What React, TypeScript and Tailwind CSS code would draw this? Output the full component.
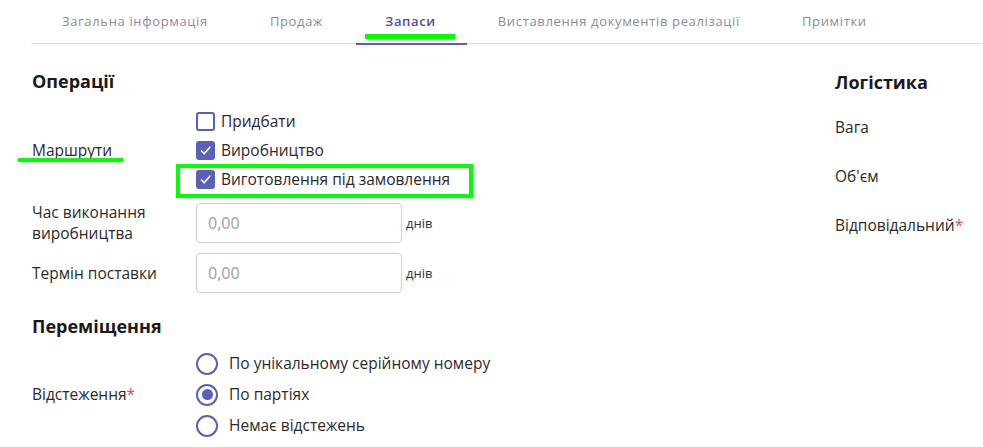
const tabs = [
  "Загальна інформація",
  "Продаж",
  "Запаси",
  "Виставлення документів реалізації",
  "Примітки",
];

const Check = ({ checked, label }: { checked: boolean; label: string }) => (
  <div className="flex items-center h-[29px]">
    <span
      className={`w-[19px] h-[19px] rounded-[3px] border-2 border-[#5b5fb8] flex items-center justify-center ${
        checked ? "bg-[#5b5fb8]" : "bg-white"
      }`}
    >
      {checked && (
        <svg width="13" height="13" viewBox="0 0 13 13">
          <polyline
            points="2.5,7 5.2,9.8 10.8,3.2"
            fill="none"
            stroke="white"
            strokeWidth="1.6"
            strokeLinecap="round"
            strokeLinejoin="round"
          />
        </svg>
      )}
    </span>
    <span className="ml-[6px] text-[15.5px] text-[#2b2b2b]">{label}</span>
  </div>
);

const Radio = ({ checked, label }: { checked: boolean; label: string }) => (
  <div className="flex items-center h-[31px]">
    <span className="w-[22px] h-[22px] rounded-full border-2 border-[#5b5fb8] flex items-center justify-center bg-white">
      {checked && <span className="w-[11px] h-[11px] rounded-full bg-[#5b5fb8]" />}
    </span>
    <span className="ml-[11px] text-[15.5px] text-[#2b2b2b]">{label}</span>
  </div>
);

const NumberField = ({ label }: { label: string }) => (
  <div className="flex items-center">
    <div className="w-[164px] text-[15.5px] leading-[21px] text-[#2b2b2b]">{label}</div>
    <div className="w-[206px] h-[40px] border border-[#cfcfd6] rounded-[4px] flex items-center px-[11px] text-[16px] text-[#9aa0a8]">
      0,00
    </div>
    <span className="ml-[4px] mt-[2px] text-[13px] text-[#333]">днів</span>
  </div>
);

const App = () => {
  return (
    <div
      className="relative w-[983px] h-[447px] overflow-hidden bg-white"
      style={{ fontFamily: '"Open Sans", "Noto Sans", sans-serif' }}
    >
      {/* tabs */}
      <div className="ml-[31px] flex h-[44px] border-b border-[#dedede]">
        {tabs.map((t) => (
          <div
            key={t}
            className={`relative px-[31px] pt-[11px] text-[13px] leading-[20px] tracking-[0.05em] ${
              t === "Запаси" ? "font-semibold text-[#4c4fa0]" : "text-[#8c8c98]"
            }`}
          >
            {t}
            {t === "Запаси" && (
              <span className="absolute left-[2px] right-0 bottom-[-2px] h-[2px] bg-[#5b5fb8]" />
            )}
          </div>
        ))}
      </div>

      <div className="flex">
        <div className="w-[835px] pl-[32px]">
          <h2 className="mt-[25px] text-[18px] leading-[24px] font-bold text-[#1a1a1a]">Операції</h2>

          <div className="mt-[14px] flex items-center">
            <div className="w-[164px] text-[15.5px] text-[#2b2b2b]">Маршрути</div>
            <div className="flex flex-col">
              <Check checked={false} label="Придбати" />
              <Check checked label="Виробництво" />
              <Check checked label="Виготовлення під замовлення" />
            </div>
          </div>

          <div className="mt-[8px] flex flex-col gap-[9px]">
            <NumberField label="Час виконання виробництва" />
            <NumberField label="Термін поставки" />
          </div>

          <h2 className="mt-[21px] text-[18px] leading-[24px] font-bold text-[#1a1a1a]">Переміщення</h2>

          <div className="mt-[10px] flex items-center">
            <div className="w-[164px] text-[15.5px] text-[#2b2b2b]">
              Відстеження<span className="text-[#e5484d]">*</span>
            </div>
            <div className="flex flex-col">
              <Radio checked={false} label="По унікальному серійному номеру" />
              <Radio checked label="По партіях" />
              <Radio checked={false} label="Немає відстежень" />
            </div>
          </div>
        </div>

        <div className="flex-1">
          <h2 className="mt-[26px] text-[18px] leading-[24px] font-bold text-[#1a1a1a]">Логістика</h2>
          <div className="mt-[9px] flex flex-col text-[15.5px] text-[#2b2b2b]">
            <div className="h-[49px] flex items-center">Вага</div>
            <div className="h-[49px] flex items-center">Об'єм</div>
            <div className="h-[49px] flex items-center">
              Відповідальний<span className="text-[#e5484d]">*</span>
            </div>
          </div>
        </div>
      </div>

      {/* green annotation marks */}
      <span className="absolute left-[365px] top-[34px] w-[90px] h-[5px] bg-[#00ff00]" />
      <span className="absolute left-[18px] top-[158px] w-[105px] h-[4px] bg-[#00ff00]" />
      <span className="absolute left-[176px] top-[164px] w-[297px] h-[34px] border-[4px] border-[#00ff00]" />
    </div>
  );
};

export default App;
